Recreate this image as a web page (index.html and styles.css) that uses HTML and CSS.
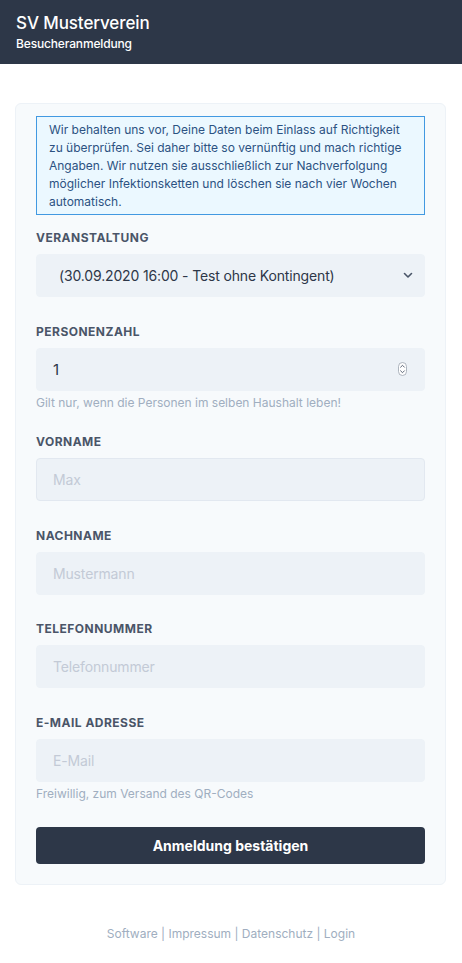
FILE: index.html
```html
<!DOCTYPE html>
<html lang="de">
<head>
<meta charset="utf-8">
<title>SV Musterverein – Besucheranmeldung</title>
<link rel="stylesheet" href="styles.css">
</head>
<body>
<header class="topbar">
  <div class="topbar-title">SV Musterverein</div>
  <div class="topbar-sub">Besucheranmeldung</div>
</header>

<main class="card">
  <div class="notice">Wir behalten uns vor, Deine Daten beim Einlass auf Richtigkeit zu überprüfen. Sei daher bitte so vernünftig und mach richtige Angaben. Wir nutzen sie ausschließlich zur Nachverfolgung möglicher Infektionsketten und löschen sie nach vier Wochen automatisch.</div>

  <div class="group">
    <label class="label">Veranstaltung</label>
    <div class="field-wrap">
      <div class="field field-select">(30.09.2020 16:00 - Test ohne Kontingent)</div>
      <svg class="chev" width="10" height="7" viewBox="0 0 10 7"><path d="M1.5 1.5 L5 5 L8.5 1.5" fill="none" stroke="#4a5568" stroke-width="1.6" stroke-linecap="round" stroke-linejoin="round"/></svg>
    </div>
  </div>

  <div class="group group-help">
    <label class="label">Personenzahl</label>
    <div class="field-wrap">
      <div class="field field-value">1</div>
      <svg class="spin" width="9" height="14" viewBox="0 0 9 14"><rect x="0.5" y="0.5" width="8" height="13" rx="4" fill="#fff" stroke="#9aa3ae" stroke-width="0.8"/><path d="M2.6 5.2 L4.5 3.3 L6.4 5.2 M2.6 8.8 L4.5 10.7 L6.4 8.8" fill="none" stroke="#4a5568" stroke-width="0.9" stroke-linecap="round"/></svg>
    </div>
    <div class="help">Gilt nur, wenn die Personen im selben Haushalt leben!</div>
  </div>

  <div class="group">
    <label class="label">Vorname</label>
    <div class="field field-ph field-bordered">Max</div>
  </div>

  <div class="group">
    <label class="label">Nachname</label>
    <div class="field field-ph">Mustermann</div>
  </div>

  <div class="group">
    <label class="label">Telefonnummer</label>
    <div class="field field-ph">Telefonnummer</div>
  </div>

  <div class="group group-last">
    <label class="label">E-Mail Adresse</label>
    <div class="field field-ph">E-Mail</div>
    <div class="help">Freiwillig, zum Versand des QR-Codes</div>
  </div>

  <button class="submit">Anmeldung bestätigen</button>
</main>

<footer class="footer">Software | Impressum | Datenschutz | Login</footer>
</body>
</html>
```

FILE: styles.css
```css
* { box-sizing: border-box; }

body {
  margin: 0;
  background: #ffffff;
  font-family: Inter, "Noto Sans", "Liberation Sans", sans-serif;
  color: #2d3748;
}

.topbar {
  background: #2d3748;
  height: 64px;
  padding: 11px 16px 0;
  color: #ffffff;
}

.topbar-title {
  font-size: 17px;
  line-height: 24px;
  font-weight: 500;
  letter-spacing: -0.1px;
}

.topbar-sub {
  font-size: 12px;
  line-height: 18px;
  font-weight: 500;
  letter-spacing: -0.15px;
}

.card {
  margin: 39px 16px 0 15px;
  background: #f7fafc;
  border: 1px solid #edf2f7;
  border-radius: 6px;
  padding: 12px 20px 20px;
  display: flex;
  flex-direction: column;
}

.notice {
  background: #ebf8ff;
  border: 1px solid #4299e1;
  color: #2c5282;
  font-size: 12px;
  line-height: 18px;
  padding: 4px 12px 3px;
  margin-bottom: 13px;
}

.group {
  display: flex;
  flex-direction: column;
  margin-bottom: 24.7px;
}

.group-help { margin-bottom: 21.3px; }
.group-last { margin-bottom: 25px; }

.label {
  font-size: 12px;
  line-height: 20px;
  font-weight: 700;
  letter-spacing: 0.04em;
  text-transform: uppercase;
  color: #4a5568;
  margin-bottom: 6px;
}

.field-wrap {
  position: relative;
}

.field {
  height: 43px;
  background: #edf2f7;
  border: 1px solid #edf2f7;
  border-radius: 4px;
  padding: 0 16px;
  display: flex;
  align-items: center;
  font-size: 14px;
  letter-spacing: -0.15px;
  color: #2d3748;
}

.field-bordered { border-color: #e2e8f0; }

.field-select { padding-left: 22px; }

.field-value { font-size: 15px; }

.field-ph { color: #c3cad6; }

.chev {
  position: absolute;
  right: 12px;
  top: 18px;
}

.spin {
  position: absolute;
  right: 18px;
  top: 14px;
}

.help {
  margin-top: 4px;
  font-size: 12px;
  line-height: 16px;
  color: #a0aec0;
}

.submit {
  height: 36.5px;
  border: 0;
  border-radius: 4px;
  background: #2d3748;
  color: #ffffff;
  font-family: Inter, "Noto Sans", "Liberation Sans", sans-serif;
  font-size: 14px;
  font-weight: 700;
  padding: 0;
}

.footer {
  margin-top: 41px;
  text-align: center;
  font-size: 12px;
  line-height: 16px;
  color: #a0aec0;
}
```
